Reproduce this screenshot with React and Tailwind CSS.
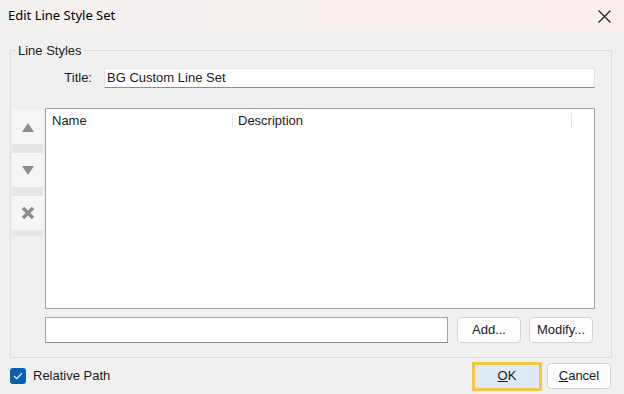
import React from "react";

function SideButton({ children, className = "" }) {
  return (
    <div className={`h-[34px] w-full bg-[#f6f6f6] flex items-center justify-center ${className}`}>
      {children}
    </div>
  );
}

export default function App() {
  return (
    <div className="w-[624px] h-[394px] bg-[#f0f0f0] flex flex-col font-['Liberation_Sans',Arial,sans-serif] text-[13px] text-[#1a1a1a] overflow-hidden">
      {/* title bar */}
      <div className="h-[32px] shrink-0 flex items-center justify-between pl-[8px] pr-[13px] bg-gradient-to-r from-[#f3f1f0] to-[#fbefed]">
        <span className="font-['Noto_Sans',sans-serif] text-[13px] text-black">Edit Line Style Set</span>
        <svg width="13" height="13" viewBox="0 0 13 13" className="mt-[1px]">
          <path d="M0.5 0.5 L12.5 12.5 M12.5 0.5 L0.5 12.5" stroke="#222" strokeWidth="1.2" />
        </svg>
      </div>

      {/* body */}
      <div className="flex-1 flex flex-col pl-[10px] pr-[12px]">
        <fieldset className="mt-[11px] h-[315px] border border-[#dcdcdc] flex flex-col pr-[16px] pl-0">
          <legend className="ml-[5px] px-[2px] text-[13px] leading-[15px]">Line Styles</legend>

          {/* title row */}
          <div className="flex items-center mt-[10px]">
            <span className="w-[81px] text-right">Title:</span>
            <div className="ml-[12px] flex-1 h-[20px] bg-white border border-[#e3e3e3] border-b-[#8c8c8c] flex items-center px-[2px] text-[13px]">
              BG Custom Line Set
            </div>
          </div>

          {/* list row */}
          <div className="flex mt-[20px] gap-[2px]">
            <div className="ml-[1px] w-[31px] mt-[2px] h-[126px] bg-[#e6e6e6] flex flex-col gap-[9px]">
              <SideButton>
                <svg width="12" height="9" viewBox="0 0 12 9">
                  <path d="M6 0 L12 9 L0 9 Z" fill="#8d8d8d" />
                </svg>
              </SideButton>
              <SideButton>
                <svg width="12" height="9" viewBox="0 0 12 9">
                  <path d="M0 0 L12 0 L6 9 Z" fill="#8d8d8d" />
                </svg>
              </SideButton>
              <SideButton>
                <svg width="14" height="14" viewBox="0 0 14 14">
                  <path d="M2 2 L12 12 M12 2 L2 12" stroke="#8d8d8d" strokeWidth="3.4" />
                </svg>
              </SideButton>
            </div>
            <div className="flex-1 h-[201px] bg-white border border-[#a3a3a3] flex flex-col">
              <div className="h-[24px] flex items-center text-[13px]">
                <div className="w-[187px] pl-[6px] h-[16px] flex items-center border-r border-[#e6e6e6]">Name</div>
                <div className="w-[339px] pl-[5px] h-[16px] flex items-center border-r border-[#e6e6e6]">Description</div>
              </div>
            </div>
          </div>

          {/* input + buttons row */}
          <div className="flex items-center ml-[34px] mt-[8px]">
            <div className="w-[403px] h-[26px] bg-white border border-[#a3a3a3] border-b-[#8c8c8c]" />
            <button className="ml-[9px] w-[64px] h-[26px] bg-[#fdfdfd] border border-[#d4d4d4] rounded-[4px] text-[13px]">
              Add...
            </button>
            <button className="ml-[8px] w-[64px] h-[26px] bg-[#fdfdfd] border border-[#d4d4d4] rounded-[4px] text-[13px]">
              Modify...
            </button>
          </div>
        </fieldset>

        {/* footer */}
        <div className="flex-1 flex items-center justify-between">
          <label className="flex items-center gap-[7px]">
            <span className="w-[16px] h-[16px] rounded-[3px] bg-[#0b5fb0] flex items-center justify-center">
              <svg width="10" height="8" viewBox="0 0 10 8">
                <path d="M1 4 L3.8 6.6 L9 1.2" stroke="#fff" strokeWidth="1.2" fill="none" />
              </svg>
            </span>
            <span className="text-[13px]">Relative Path</span>
          </label>
          <div className="flex items-center gap-[5px] mr-[1px]">
            <button className="w-[70px] h-[29px] bg-[#dfeaf6] border-[3px] border-[#f2c744] text-[13px]">
              <span className="underline">O</span>K
            </button>
            <button className="w-[64px] h-[26px] bg-[#fdfdfd] border border-[#d4d4d4] rounded-[4px] text-[13px]">
              <span className="underline">C</span>ancel
            </button>
          </div>
        </div>
      </div>
    </div>
  );
}
